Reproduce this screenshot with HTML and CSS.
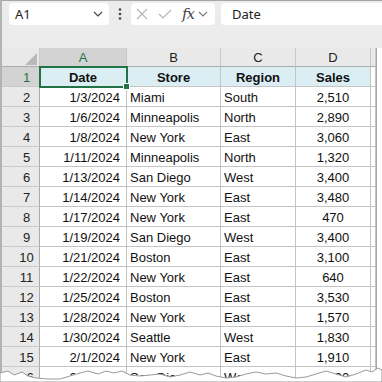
FILE: index.html
```html
<!DOCTYPE html>
<html lang="en">
<head>
    <meta charset="UTF-8">
    <meta name="viewport" content="width=device-width, initial-scale=1.0">
    <title>Sales Sheet</title>
    <link rel="stylesheet" href="styles.css">
</head>
<body>
    <div class="page">
        <div class="window">
            <div class="formula-bar">
                <div class="name-box">
                    <span>A1</span>
                    <svg width="10" height="6" viewBox="0 0 10 6"><polyline points="1,1 5,5 9,1" fill="none" stroke="#444" stroke-width="1.2"/></svg>
                </div>
                <div class="dots">
                    <svg width="4" height="12" viewBox="0 0 4 12"><circle cx="2" cy="1.5" r="1.3" fill="#444"/><circle cx="2" cy="6" r="1.3" fill="#444"/><circle cx="2" cy="10.5" r="1.3" fill="#444"/></svg>
                </div>
                <div class="fx-box">
                    <svg class="icon-x" width="12" height="12" viewBox="0 0 12 12"><path d="M1 1 L11 11 M11 1 L1 11" stroke="#b4b4b4" stroke-width="1.1" fill="none"/></svg>
                    <svg class="icon-check" width="14" height="10" viewBox="0 0 14 10"><polyline points="1,5 5,9 13,1" fill="none" stroke="#b4b4b4" stroke-width="1.1"/></svg>
                    <span class="fx">fx</span>
                    <svg class="icon-down" width="10" height="6" viewBox="0 0 10 6"><polyline points="1,1 5,5 9,1" fill="none" stroke="#777" stroke-width="1.1"/></svg>
                </div>
                <div class="formula-input">Date</div>
            </div>
            <div class="sheet">
                <table class="grid">
                    <colgroup>
                        <col class="c-row">
                        <col class="c-a">
                        <col class="c-b">
                        <col class="c-c">
                        <col class="c-d">
                        <col class="c-e">
                    </colgroup>
                    <tr class="col-head">
                        <th class="corner"><svg width="12" height="12" viewBox="0 0 12 12"><polygon points="12,0 12,12 0,12" fill="#b9b9b9"/></svg></th>
                        <th class="sel">A</th>
                        <th>B</th>
                        <th>C</th>
                        <th>D</th>
                        <th></th>
                    </tr>
                    <tr class="head">
                        <th class="rh sel">1</th>
                        <td class="active">Date</td>
                        <td>Store</td>
                        <td>Region</td>
                        <td>Sales</td>
                        <td class="e"></td>
                    </tr>
                    <tr><th class="rh">2</th><td class="date">1/3/2024</td><td>Miami</td><td>South</td><td class="num">2,510</td><td class="e"></td></tr>
                    <tr><th class="rh">3</th><td class="date">1/6/2024</td><td>Minneapolis</td><td>North</td><td class="num">2,890</td><td class="e"></td></tr>
                    <tr><th class="rh">4</th><td class="date">1/8/2024</td><td>New York</td><td>East</td><td class="num">3,060</td><td class="e"></td></tr>
                    <tr><th class="rh">5</th><td class="date">1/11/2024</td><td>Minneapolis</td><td>North</td><td class="num">1,320</td><td class="e"></td></tr>
                    <tr><th class="rh">6</th><td class="date">1/13/2024</td><td>San Diego</td><td>West</td><td class="num">3,400</td><td class="e"></td></tr>
                    <tr><th class="rh">7</th><td class="date">1/14/2024</td><td>New York</td><td>East</td><td class="num">3,480</td><td class="e"></td></tr>
                    <tr><th class="rh">8</th><td class="date">1/17/2024</td><td>New York</td><td>East</td><td class="num">470</td><td class="e"></td></tr>
                    <tr><th class="rh">9</th><td class="date">1/19/2024</td><td>San Diego</td><td>West</td><td class="num">3,400</td><td class="e"></td></tr>
                    <tr><th class="rh">10</th><td class="date">1/21/2024</td><td>Boston</td><td>East</td><td class="num">3,100</td><td class="e"></td></tr>
                    <tr><th class="rh">11</th><td class="date">1/22/2024</td><td>New York</td><td>East</td><td class="num">640</td><td class="e"></td></tr>
                    <tr><th class="rh">12</th><td class="date">1/25/2024</td><td>Boston</td><td>East</td><td class="num">3,530</td><td class="e"></td></tr>
                    <tr><th class="rh">13</th><td class="date">1/28/2024</td><td>New York</td><td>East</td><td class="num">1,570</td><td class="e"></td></tr>
                    <tr><th class="rh">14</th><td class="date">1/30/2024</td><td>Seattle</td><td>West</td><td class="num">1,830</td><td class="e"></td></tr>
                    <tr><th class="rh">15</th><td class="date">2/1/2024</td><td>New York</td><td>East</td><td class="num">1,910</td><td class="e"></td></tr>
                    <tr><th class="rh">16</th><td class="date">2/4/2024</td><td>San Diego</td><td>West</td><td class="num">2,390</td><td class="e"></td></tr>
                </table>
            </div>
        </div>

        <!-- torn bottom edge -->
        <svg class="tear" width="382" height="20" viewBox="0 362 382 20">
            <polygon points="0,373 8,371 14,375 22,372 28,376 36,378 48,379 60,379 70,376 80,373 88,371 98,374 106,371 114,373 122,371 130,375 140,376 150,375 160,374 170,377 180,375 190,372 200,375 208,373 216,376 226,378 236,377 246,374 256,372 266,374 276,373 286,376 296,378 306,377 316,374 326,371 336,374 346,377 356,374 366,370 372,372 378,368 382,370 382,382 0,382" fill="#fff" stroke="#9a9a9a" stroke-width="1"/>
        </svg>
    </div>
</body>
</html>
```

FILE: styles.css
```css
body {
    margin: 0;
    background-color: #fff;
    font-family: "Liberation Sans", Arial, sans-serif;
}

.page {
    position: relative;
    width: 382px;
    height: 382px;
    overflow: hidden;
}

.window {
    width: 382px;
    height: 382px;
    box-sizing: border-box;
    border-top: 1px solid #a6a6a6;
    border-left: 2px solid #b3b3b3;
    background-color: #e9e9e9;
    display: flex;
    flex-direction: column;
}

/* formula bar */
.formula-bar {
    flex-shrink: 0;
    height: 47px;
    box-sizing: border-box;
    padding: 2px 0 0 7px;
    display: flex;
    align-items: flex-start;
    background-color: #ececec;
    font-family: "Noto Sans", sans-serif;
    font-size: 13px;
    color: #222;
}

.name-box {
    width: 100px;
    height: 22px;
    box-sizing: border-box;
    padding: 0 6px;
    background-color: #fff;
    border-radius: 4px;
    display: flex;
    align-items: center;
    justify-content: space-between;
}

.dots {
    width: 22px;
    height: 22px;
    display: flex;
    align-items: center;
    justify-content: center;
}

.fx-box {
    width: 84px;
    height: 22px;
    box-sizing: border-box;
    padding-left: 5px;
    background-color: #fff;
    border-radius: 4px;
    display: flex;
    align-items: center;
}

.icon-check {
    margin-left: 10px;
}

.fx {
    margin-left: 10px;
    font-family: "DejaVu Serif", "Liberation Serif", serif;
    font-style: italic;
    font-size: 15px;
    color: #444;
    letter-spacing: -1px;
}

.icon-down {
    margin-left: 4px;
}

.formula-input {
    flex: 1;
    height: 22px;
    margin-left: 6px;
    padding-left: 11px;
    background-color: #fff;
    border-radius: 4px 0 0 4px;
    line-height: 22px;
}

/* sheet */
.sheet {
    flex: 1;
    min-height: 0;
    background-color: #fff;
}

.grid {
    border-collapse: separate;
    border-spacing: 0;
    table-layout: fixed;
    width: 374px;
    font-size: 13px;
    color: #111;
    border-right: 1px solid #a8a8a8;
}

.c-row { width: 38px; }
.c-a { width: 87px; }
.c-b { width: 94px; }
.c-c { width: 75px; }
.c-d { width: 75px; }
.c-e { width: 5px; }

.grid th,
.grid td {
    box-sizing: border-box;
    height: 20px;
    padding: 3px 3px 0 3px;
    line-height: 16px;
    border-right: 1px solid #c4c4c4;
    border-bottom: 1px solid #c4c4c4;
    white-space: nowrap;
    overflow: hidden;
    text-align: left;
    font-weight: normal;
}

.col-head th {
    height: 19px;
    padding-top: 2px;
    background-color: #e9e9e9;
    text-align: center;
    color: #222;
    border-right-color: #c9c9c9;
    border-bottom-color: #ababab;
}

.col-head .corner {
    padding: 3px 2px 0 0;
    text-align: right;
    line-height: 0;
}

.grid .rh {
    padding-left: 12px;
    padding-right: 0;
    text-align: center;
    background-color: #e9e9e9;
    color: #222;
    border-right-color: #ababab;
    border-bottom-color: #c9c9c9;
}

.grid .sel {
    background-color: #d3d3d3;
    color: #217346;
}

.col-head .sel {
    border-bottom: 1px solid #217346;
}

.grid .rh.sel {
    border-right: 1px solid #217346;
}

.head td {
    background-color: #daeef3;
    font-weight: bold;
    text-align: center;
}

.head td.e {
    background-color: #fff;
}

.grid td.active {
    position: relative;
    overflow: visible;
    outline: 2px solid #217346;
    outline-offset: -1px;
}

.grid td.active::after {
    content: "";
    position: absolute;
    right: -4px;
    bottom: -4px;
    width: 5px;
    height: 5px;
    background-color: #217346;
    border: 1px solid #fff;
}

.grid .date {
    text-align: right;
    padding-right: 6px;
}

.grid .num {
    text-align: center;
}

.grid .e {
    padding: 0;
}

.tear {
    position: absolute;
    left: 0;
    bottom: 0;
}
```
